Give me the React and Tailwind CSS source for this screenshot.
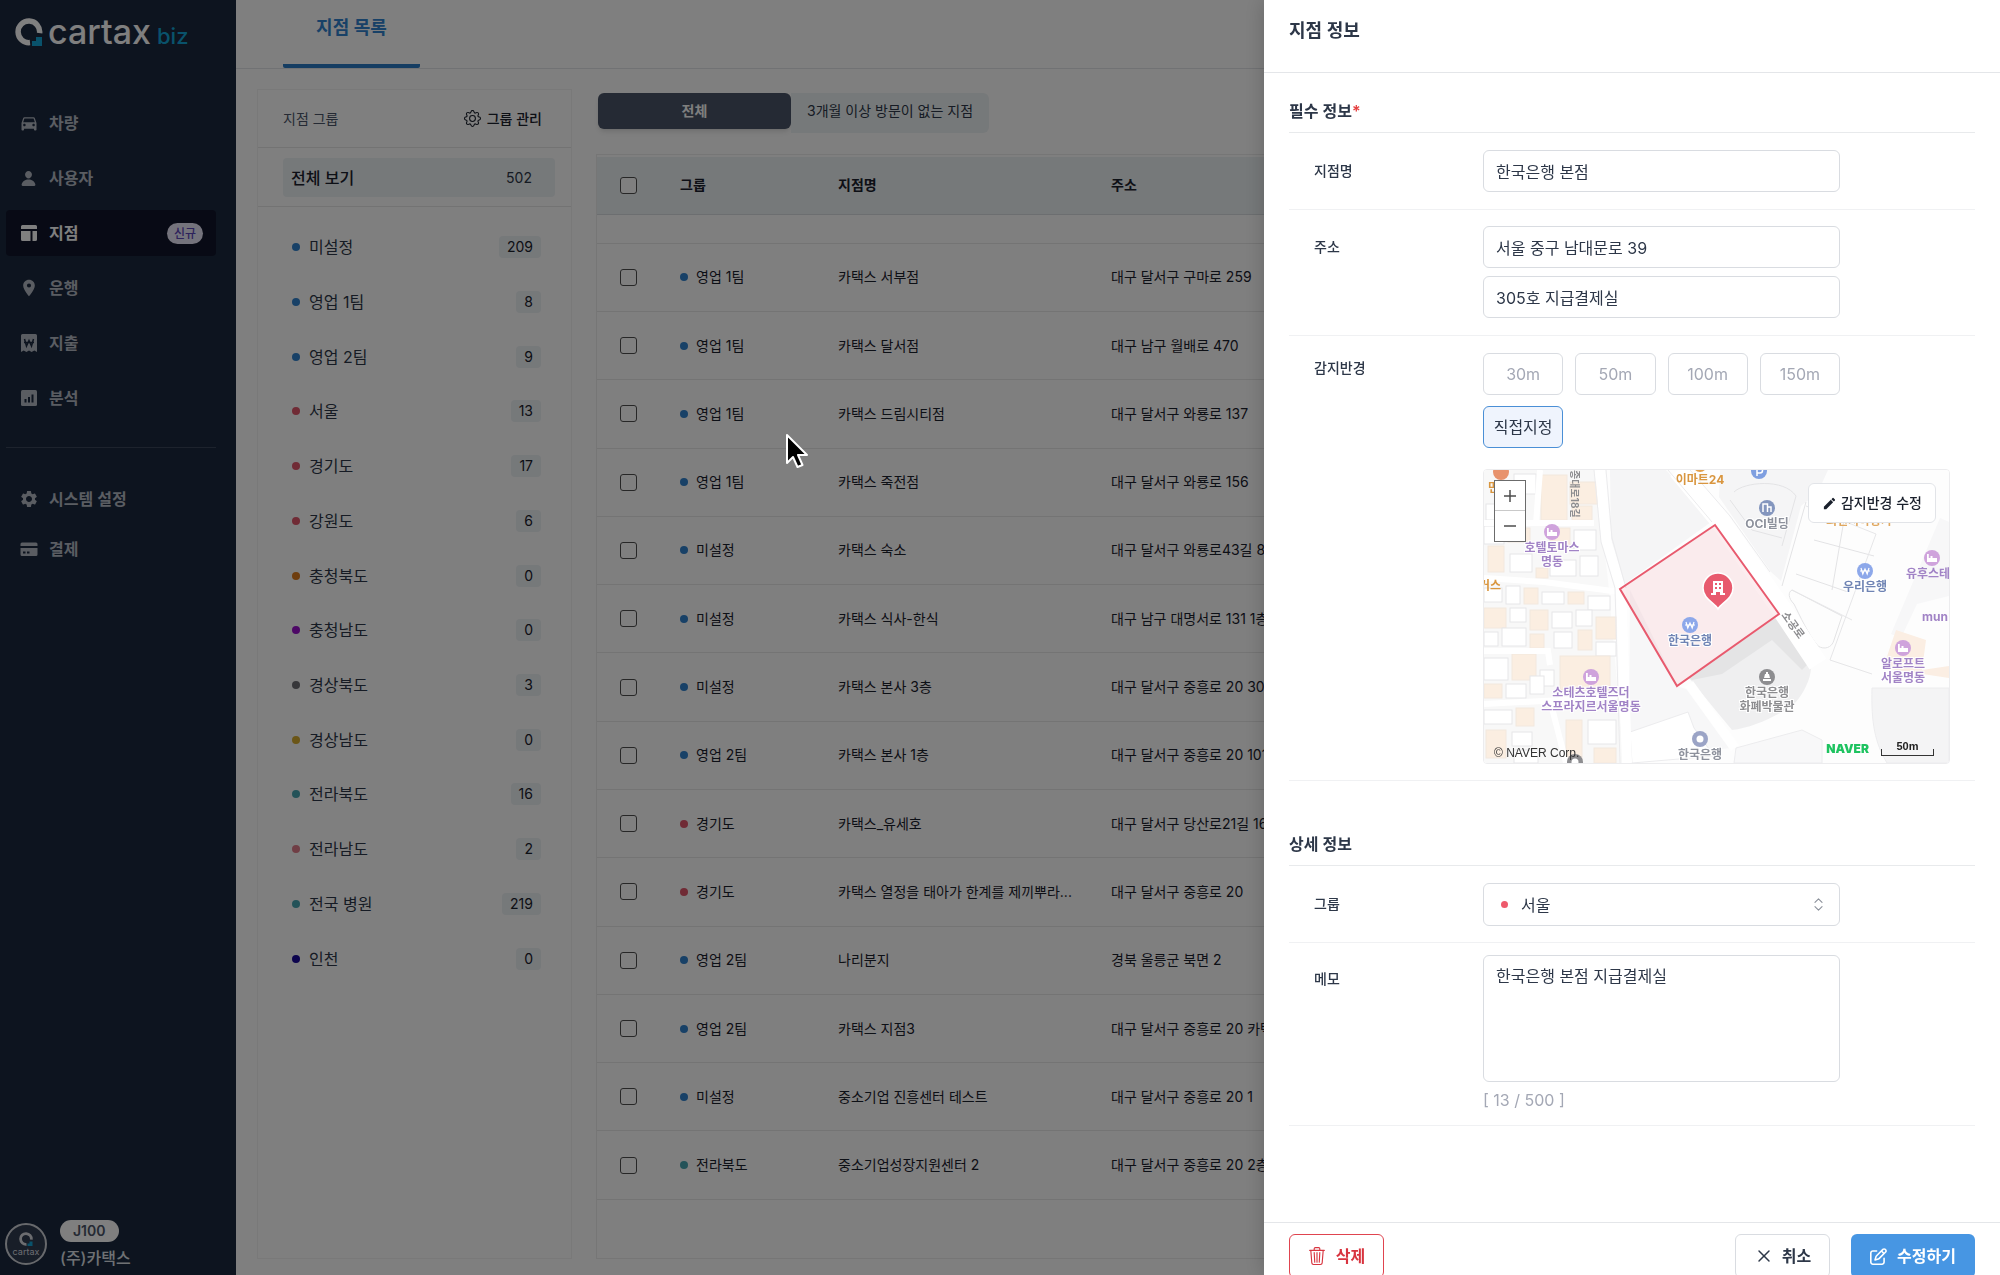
import React, { useState } from "react";
import clsx from "clsx";
import { BsGear, BsTrash3 } from "react-icons/bs";
import { IoPerson } from "react-icons/io5";
import { FaRegPenToSquare } from "react-icons/fa6";
import { MdDirectionsCar, MdEdit, MdLocationOn, MdSettings } from "react-icons/md";
import { ChevronsUpDown, X } from "lucide-react";

const BLUE = "bg-[#3182ce]";
const RED = "bg-[#e0566b]";
const TEAL = "bg-[#46a5b0]";

const GROUPS = [
  { name: "미설정", count: 209, color: BLUE },
  { name: "영업 1팀", count: 8, color: BLUE },
  { name: "영업 2팀", count: 9, color: BLUE },
  { name: "서울", count: 13, color: RED },
  { name: "경기도", count: 17, color: RED },
  { name: "강원도", count: 6, color: RED },
  { name: "충청북도", count: 0, color: "bg-[#dd7a1c]" },
  { name: "충청남도", count: 0, color: "bg-[#9a10cc]" },
  { name: "경상북도", count: 3, color: "bg-[#6e6e74]" },
  { name: "경상남도", count: 0, color: "bg-[#d6ac2e]" },
  { name: "전라북도", count: 16, color: TEAL },
  { name: "전라남도", count: 2, color: "bg-[#e07c8a]" },
  { name: "전국 병원", count: 219, color: TEAL },
  { name: "인천", count: 0, color: "bg-[#1a0a9c]" },
];

const BRANCHES = [
  { group: "영업 1팀", color: BLUE, name: "카택스 서부점", address: "대구 달서구 구마로 259" },
  { group: "영업 1팀", color: BLUE, name: "카택스 달서점", address: "대구 남구 월배로 470" },
  { group: "영업 1팀", color: BLUE, name: "카택스 드림시티점", address: "대구 달서구 와룡로 137" },
  { group: "영업 1팀", color: BLUE, name: "카택스 죽전점", address: "대구 달서구 와룡로 156" },
  { group: "미설정", color: BLUE, name: "카택스 숙소", address: "대구 달서구 와룡로43길 8" },
  { group: "미설정", color: BLUE, name: "카택스 식사-한식", address: "대구 남구 대명서로 131 1층" },
  { group: "미설정", color: BLUE, name: "카택스 본사 3층", address: "대구 달서구 중흥로 20 301호" },
  { group: "영업 2팀", color: BLUE, name: "카택스 본사 1층", address: "대구 달서구 중흥로 20 101호" },
  { group: "경기도", color: RED, name: "카택스_유세호", address: "대구 달서구 당산로21길 16" },
  {
    group: "경기도",
    color: RED,
    name: "카택스 열정을 태아가 한계를 제끼뿌라...",
    address: "대구 달서구 중흥로 20",
  },
  { group: "영업 2팀", color: BLUE, name: "나리분지", address: "경북 울릉군 북면 2" },
  { group: "영업 2팀", color: BLUE, name: "카택스 지점3", address: "대구 달서구 중흥로 20 카택스" },
  { group: "미설정", color: BLUE, name: "중소기업 진흥센터 테스트", address: "대구 달서구 중흥로 20 1" },
  { group: "전라북도", color: TEAL, name: "중소기업성장지원센터 2", address: "대구 달서구 중흥로 20 2층" },
];

const BranchIcon = () => (
  <svg viewBox="0 0 18 18" className="size-[18px]" fill="currentColor">
    <path d="M2.500 1h13A1.500 1.500 0 0117 2.500V5H1V2.500A1.500 1.500 0 012.500 1zM1 7h9.500v10h-8A1.500 1.500 0 011 15.500zM12.500 7H17v8.500a1.500 1.500 0 01-1.500 1.500h-3z" />
  </svg>
);

const ExpenseIcon = () => (
  <svg viewBox="0 0 18 18" className="size-[18px]">
    <path
      fill="currentColor"
      d="M2.500 0h13A1.500 1.500 0 0117 1.500V18l-2.700-1.600L11.600 18 9 16.400 6.400 18l-2.700-1.600L1 18V1.500A1.500 1.500 0 012.500 0z"
    />
    <path
      d="M4.500 5l2 7L9 6.500l2.500 5.500 2-7M4 8.500h10"
      fill="none"
      stroke="#1a283e"
      strokeWidth="1.500"
    />
  </svg>
);

const ReportIcon = () => (
  <svg viewBox="0 0 18 18" className="size-[18px]">
    <rect x="1" y="1" width="16" height="16" rx="1.500" fill="currentColor" />
    <path d="M5.500 13.500V10M9 13.500V8M12.500 13.500v-8" stroke="#1a283e" strokeWidth="2" />
  </svg>
);

const CardIcon = () => (
  <svg viewBox="0 0 18 18" className="size-[18px]">
    <path
      fill="currentColor"
      d="M2 2.500h14A1.500 1.500 0 0117.500 4v2H.5V4A1.500 1.500 0 012 2.500zM.5 8h17v6.500A1.500 1.500 0 0116 16H2a1.500 1.500 0 01-1.500-1.500z"
    />
    <path d="M3 12.500h2.500M7 12.500h2.500" stroke="#1a283e" strokeWidth="2" />
  </svg>
);

const MENU = [
  { label: "차량", icon: <MdDirectionsCar className="size-5" /> },
  { label: "사용자", icon: <IoPerson className="size-[17px]" /> },
  { label: "지점", icon: <BranchIcon />, active: true, badge: "신규" },
  { label: "운행", icon: <MdLocationOn className="size-5" /> },
  { label: "지출", icon: <ExpenseIcon /> },
  { label: "분석", icon: <ReportIcon /> },
];

const SETTINGS_MENU = [
  { label: "시스템 설정", icon: <MdSettings className="size-5" /> },
  { label: "결제", icon: <CardIcon /> },
];

const LogoMark = ({ className }) => (
  <svg viewBox="0 0 28 28" className={className}>
    <path
      d="M15 24.600A10.800 10.800 0 1124.600 15.200"
      fill="none"
      stroke="currentColor"
      strokeWidth="5.500"
    />
    <path d="M17 28v-5h4v-4h6v9z" fill="#12a5d6" />
  </svg>
);

const MenuItem = ({ item }) => (
  <a
    href="#"
    className={clsx(
      "flex h-[46px] items-center rounded pr-[13px] pl-3 text-base font-semibold",
      item.active ? "bg-[#10152a] text-white" : "text-[#b4bac4]"
    )}
  >
    <span className="flex w-[21px] justify-center">{item.icon}</span>
    <span className="ml-[10px]">{item.label}</span>
    {item.badge && (
      <span className="ml-auto rounded-full bg-[#e9e6f8] px-[7px] text-xs leading-[21px] font-medium text-[#5b45b8]">
        {item.badge}
      </span>
    )}
  </a>
);

const Sidebar = () => (
  <aside className="flex w-[236px] shrink-0 flex-col bg-[#1a283e] pb-[5px]">
    <a
      href="#"
      className="flex h-[60px] items-center pt-1 pl-[15px] text-white"
      aria-label="cartax biz"
    >
      <LogoMark className="size-[28px]" />
      <span className="ml-[5px] font-[Inter] text-[34px] leading-none font-medium">cartax</span>
      <span className="ml-[6px] pt-2 font-[Inter] text-[22px] leading-none font-medium text-[#12a5d6]">
        biz
      </span>
    </a>
    <nav className="mt-10 flex flex-1 flex-col px-[6px] pr-5">
      <div className="flex flex-col gap-[9px]">
        {MENU.map((item) => (
          <MenuItem key={item.label} item={item} />
        ))}
      </div>
      <div className="mt-[26px] flex flex-col gap-1 border-t border-[#3b465a] pt-7">
        {SETTINGS_MENU.map((item) => (
          <MenuItem key={item.label} item={item} />
        ))}
      </div>
    </nav>
    <div className="flex items-center gap-[13px] pl-[5px]">
      <div className="flex size-[42px] flex-col items-center justify-center rounded-full border-2 border-[#cfd2d8] bg-[#303c50] text-[#d9dbe0]">
        <LogoMark className="size-[14px]" />
        <span className="font-[Inter] text-[9px] leading-[11px]">cartax</span>
      </div>
      <div>
        <span className="inline-block rounded-full bg-white px-[13px] text-sm leading-[22px] font-semibold text-[#4a5568]">
          J100
        </span>
        <div className="mt-1 text-base leading-6 font-medium text-[#dfe2e8]">(주)카택스</div>
      </div>
    </div>
  </aside>
);

const GroupPanel = () => (
  <section className="w-[315px] shrink-0 border border-[#f2f2f2]">
    <div className="flex h-[58px] items-center border-b border-[#e6e6e6] pr-[29px] pl-[25px]">
      <h2 className="text-sm text-[#4a5568]">지점 그룹</h2>
      <button
        type="button"
        className="ml-auto flex items-center gap-[6px] text-sm font-medium text-[#1a202c]"
      >
        <BsGear className="size-[17px]" />
        그룹 관리
      </button>
    </div>
    <div className="border-b border-[#e6e6e6] pt-[10px] pr-4 pb-[9px] pl-[25px]">
      <button
        type="button"
        className="flex h-[39px] w-full items-center rounded bg-[#edf2f4] pr-[23px] pl-2"
      >
        <span className="text-base font-medium text-[#1a202c]">전체 보기</span>
        <span className="ml-auto text-sm text-[#2d3748]">502</span>
      </button>
    </div>
    <ul className="mt-[13px] grid h-[766px] auto-rows-fr pr-[30px] pl-[34px]">
      {GROUPS.map((group) => (
        <li key={group.name} className="flex items-center">
          <span className={clsx("size-2 rounded-full", group.color)} />
          <span className="ml-[9px] text-base text-[#2d3748]">{group.name}</span>
          <span className="ml-auto rounded bg-[#edf2f4] px-2 text-sm leading-[22px] text-[#1a202c]">
            {group.count}
          </span>
        </li>
      ))}
    </ul>
  </section>
);

const CheckBox = ({ label }) => (
  <input
    type="checkbox"
    aria-label={label}
    className="block size-[17px] appearance-none rounded-[3px] border border-[#4f4f4f] bg-white"
  />
);

const BranchTable = () => (
  <table className="h-[1043px] w-full table-fixed text-left text-sm text-[#1a202c]">
    <colgroup>
      <col className="w-[83px]" />
      <col className="w-[158px]" />
      <col className="w-[273px]" />
      <col />
    </colgroup>
    <thead>
      <tr className="h-[57px] border-b border-[#d8dde0] bg-[#edf2f4]">
        <th className="pl-[23px]">
          <CheckBox label="전체 선택" />
        </th>
        <th className="font-semibold">그룹</th>
        <th className="font-semibold">지점명</th>
        <th className="font-semibold">주소</th>
      </tr>
    </thead>
    <tbody>
      <tr className="h-[29px] border-b border-[#e8e8e8]" aria-hidden="true">
        <td colSpan={4} />
      </tr>
      {BRANCHES.map((branch) => (
        <tr key={branch.name} className="h-[68px] border-b border-[#e8e8e8]">
          <td className="pl-[23px]">
            <CheckBox label={branch.name} />
          </td>
          <td>
            <div className="flex items-center gap-2">
              <span className={clsx("size-2 rounded-full", branch.color)} />
              {branch.group}
            </div>
          </td>
          <td className="truncate pr-4">{branch.name}</td>
          <td className="whitespace-nowrap">{branch.address}</td>
        </tr>
      ))}
    </tbody>
  </table>
);

// small city blocks on the west side of the map
const HOUSES = [
  [57, 5, 26, 45, 1], [86, 12, 28, 22, 1], [88, 36, 20, 14, 1], [2, 34, 24, 16, 0],
  [30, 4, 22, 20, 0], [0, 56, 20, 18, 0], [24, 58, 22, 14, 1], [66, 58, 20, 22, 1],
  [90, 60, 22, 20, 0], [4, 76, 16, 26, 1], [26, 84, 22, 18, 0], [52, 98, 12, 10, 1],
  [66, 90, 26, 16, 0], [96, 86, 18, 20, 0], [0, 118, 18, 14, 0], [22, 116, 14, 18, 0],
  [40, 118, 14, 16, 1], [58, 122, 22, 12, 0], [84, 122, 16, 12, 1], [104, 126, 22, 14, 0],
  [0, 138, 22, 20, 1], [26, 138, 16, 14, 0], [46, 140, 18, 20, 1], [68, 142, 20, 16, 0],
  [92, 140, 16, 16, 0], [112, 147, 20, 22, 1], [0, 162, 14, 14, 0], [18, 158, 24, 18, 0],
  [46, 164, 14, 14, 1], [70, 162, 18, 16, 0], [94, 160, 14, 20, 1], [112, 172, 20, 14, 0],
  [0, 188, 24, 22, 0], [28, 184, 24, 26, 1], [56, 200, 14, 16, 0], [76, 186, 50, 34, 1],
  [0, 214, 18, 14, 1], [22, 214, 20, 14, 0], [46, 206, 14, 18, 0], [0, 240, 28, 14, 0],
  [32, 238, 18, 18, 1], [2, 260, 20, 28, 1], [28, 262, 20, 14, 0], [30, 280, 24, 13, 0],
  [82, 250, 16, 40, 1], [104, 250, 28, 24, 0], [110, 278, 22, 15, 1],
];

const Poi = ({ x, y, color, glyph, lines, textColor = color, gap = 16 }) => (
  <g>
    <circle cx={x} cy={y} r="8" fill={color} />
    {glyph === "won" && (
      <path
        d={`M${x - 4} ${y - 3}l1.800 6L${x} ${y - 2}l2.200 5 1.800-6M${x - 5} ${y}h10`}
        fill="none"
        stroke="#fff"
        strokeWidth="1.200"
      />
    )}
    {glyph === "bed" && (
      <path d={`M${x - 5} ${y - 4}h1.800v4H${x - 1.5}v-2h2v2H${x + 5}v4h-10z`} fill="#fff" />
    )}
    {glyph === "building" && (
      <path
        d={`M${x - 4} ${y + 4}v-8h4.500v8M${x + 1} ${y - 1}h3v5`}
        fill="none"
        stroke="#fff"
        strokeWidth="1.500"
      />
    )}
    {glyph === "museum" && (
      <path d={`M${x - 4} ${y + 4}v-2h8v2zM${x - 3} ${y + 1}l1-4h1v-2h2v2h1l1 4z`} fill="#fff" />
    )}
    {glyph === "ring" && <circle cx={x} cy={y} r="3.500" fill="#fff" />}
    {lines.map((line, i) => (
      <text
        key={line}
        x={x}
        y={y + gap + 4 + i * 14}
        textAnchor="middle"
        fill={textColor}
        stroke="#fff"
        strokeWidth="2"
        paintOrder="stroke"
      >
        {line}
      </text>
    ))}
  </g>
);

const MapCanvas = () => (
  <svg
    viewBox="0 0 465 293"
    preserveAspectRatio="xMidYMid slice"
    className="block size-full text-[12px] font-bold"
  >
    <rect width="465" height="293" fill="#fdfdfd" />
    <path d="M126 0h56l45 52-92 66-8-50z" fill="#f5f5f6" />
    <path d="M236 0h108l-10 22-17 14-20 75-10-9-52-75z" fill="#f5f5f6" />
    <path
      d="M250 22c10-10 50-14 62 4l-14 50M246 30l22 30 30 8M322 32l-24 84M330 70l60 16M312 104l52 18M360 50l-12 70M308 120c-4 2-4 8 2 14 6 12 14 30 24 42 6 4 14 2 16-6l8-24z"
      fill="none"
      stroke="#e3e3e5"
      strokeWidth="1"
    />
    <path d="M308 120l60 30M322 36l70 28-46 126 42 14" fill="none" stroke="#e6e6e8" />
    <path d="M456 48l9 4v74l-32 8-16 34-10-4z" fill="#f7f7f8" />
    <path d="M412 160l30 10-4 30 27-4v12l-66-10z" fill="#fbeee3" />
    <path d="M388 218h77v75h-62c-12-20-16-40-15-75z" fill="#f4f4f5" stroke="#ececee" />
    <path d="M146 120l47 96 12 4 42 58-92 10-10-24z" fill="#f7f7f8" />
    <path d="M146 262l58-20 6 16 20 28-82 7z" fill="#fff" stroke="#ececee" />
    <path d="M294 146l32 46c4 8-4 30-16 42-16 12-42 24-62 26l-43-52z" fill="#efeff0" />
    <path d="M294 146l32 46-8 8-30-30-50 34-30 6-3-2z" fill="#e4e4e5" />
    <path d="M252 278l66-18 20 10v23h-88z" fill="#f8f8f9" stroke="#ececee" />
    <path d="M0 0h110l14 110 16 183H0z" fill="#f8f8f8" />
    {HOUSES.map(([x, y, w, h, warm]) => (
      <rect
        key={`${x}-${y}`}
        x={x}
        y={y}
        width={w}
        height={h}
        fill={warm ? "#fbeee1" : "#fff"}
        stroke={warm ? "#f2e8de" : "#e6e6e8"}
        strokeWidth="1"
      />
    ))}
    <path
      d="M0 108l60 4 76 10M0 181h64l2 14M0 234l78-4 60-4M56 0l-4 54M0 53h110M66 230l16 63"
      fill="none"
      stroke="#fff"
      strokeWidth="6"
    />
    <path d="M116 0l6 70 15 48 6 175" fill="none" stroke="#fff" strokeWidth="10" />
    <path d="M110 0l7 72 14 46 5 175M122 0l6 68 14 50" fill="none" stroke="#ebebed" />
    <path d="M194 0l40 48 64 92 36 54" fill="none" stroke="#fff" strokeWidth="20" />
    <path d="M184 0l44 52M206 0l40 46 40 56" fill="none" stroke="#ebebed" />
    <path d="M205 214l46 64" stroke="#fff" strokeWidth="10" />

    <text x="216" y="14" textAnchor="middle" fill="#d9963f">이마트24</text>
    <circle cx="216" cy="-5" r="7" fill="#e2a04c" />
    <circle cx="275" cy="1" r="8" fill="#7f9fe0" />
    <path d="M273 6v-8h3a2.500 2.500 0 010 5h-3" fill="none" stroke="#fff" strokeWidth="1.500" />
    <circle cx="17" cy="2" r="8" fill="#e8936d" />
    <text x="4" y="22" fill="#d9963f">면</text>
    <text x="17" y="120" textAnchor="end" fill="#d9963f">커스</text>
    <text transform="translate(87 0) rotate(90)" fontSize="10" fill="#8d8d90">종대로18길</text>
    <text transform="translate(297 145) rotate(54)" fontSize="11" fill="#8d8d90">소공로</text>
    <text x="375" y="55" textAnchor="middle" fill="#e0a860">회현지하상가</text>
    <text x="422" y="108" fill="#a183c6">유후스테이</text>
    <text x="438" y="151" fill="#a183c6">mun</text>

    <Poi x={68} y={62} color="#cfa3dc" textColor="#a183c6" glyph="bed" lines={["호텔토마스", "명동"]} />
    <Poi x={107} y={207} color="#cfa3dc" textColor="#a183c6" glyph="bed" lines={["소테츠호텔즈더", "스프라지르서울명동"]} />
    <Poi x={419} y={178} color="#cfa3dc" textColor="#a183c6" glyph="bed" lines={["알로프트", "서울명동"]} />
    <Poi x={448} y={88} color="#cfa3dc" glyph="bed" lines={[]} />
    <Poi x={283} y={38} color="#8496be" textColor="#8d919c" glyph="building" lines={["OCI빌딩"]} />
    <Poi x={381} y={101} color="#8da8ea" textColor="#6f84b4" glyph="won" lines={["우리은행"]} />
    <Poi x={283} y={207} color="#8d8d90" glyph="museum" lines={["한국은행", "화폐박물관"]} />
    <Poi x={216} y={269} color="#9ba4c6" textColor="#8d919c" glyph="ring" lines={["한국은행"]} />
    <Poi x={91} y={292} color="#8d8d90" glyph="ring" lines={[]} />

    <path
      d="M231 55l64 89-102 72-57-97z"
      fill="#e85a6e"
      fillOpacity="0.110"
      stroke="#e85a6e"
      strokeWidth="2"
    />
    <Poi x={206} y={155} color="#8da8ea" textColor="#6f84b4" glyph="won" lines={["한국은행"]} />
    <path
      d="M234 139c-3-6-15-10-15-21a15 15 0 0130 0c0 11-12 15-15 21z"
      fill="#e85a6e"
      stroke="#fff"
      strokeWidth="1.500"
    />
    <path
      fill="#fff"
      fillRule="evenodd"
      d="M229 111h10v12h2v2h-5v-3h-4v3h-5v-2h2zM231 113v2h2v-2zM235 113v2h2v-2zM231 117v2h2v-2zM235 117v2h2v-2z"
    />
  </svg>
);

const BranchMap = () => (
  <div className="relative mt-[21px] mr-[25px] h-[295px] overflow-hidden rounded border border-[#ececee]">
    <MapCanvas />
    <div className="absolute top-[10px] left-[10px] flex w-8 flex-col border border-[#6b6b6b] bg-white text-[#4d4d4d]">
      <button
        type="button"
        aria-label="확대"
        className="flex h-[30px] items-center justify-center border-b border-[#c9c9c9]"
      >
        <svg viewBox="0 0 14 14" className="size-[14px]" stroke="currentColor" strokeWidth="1.500">
          <path d="M1 7h12M7 1v12" />
        </svg>
      </button>
      <button type="button" aria-label="축소" className="flex h-[30px] items-center justify-center">
        <svg viewBox="0 0 14 14" className="size-[14px]" stroke="currentColor" strokeWidth="1.500">
          <path d="M1 7h12" />
        </svg>
      </button>
    </div>
    <button
      type="button"
      className="absolute top-[13px] right-[13px] flex h-10 items-center gap-1 rounded-md border border-[#e2e4e8] bg-white px-[13px] text-sm font-medium text-[#1a202c]"
    >
      <MdEdit className="size-[15px]" />
      감지반경 수정
    </button>
    <span className="absolute bottom-[-2px] left-[10px] font-['Liberation_Sans'] text-xs leading-6 text-[#333]">
      © NAVER Corp.
    </span>
    <div className="absolute right-[15px] bottom-[7px] flex items-end gap-3">
      <span className="font-[Inter] text-xs leading-[14px] font-black text-[#1ec360]">NAVER</span>
      <span className="relative w-[53px] pb-[3px] text-center font-['Liberation_Sans'] text-[11px] leading-[13px] font-bold text-[#222]">
        50m
        <span className="absolute inset-x-0 bottom-0 h-[7px] border-x border-b border-[#333]" />
      </span>
    </div>
  </div>
);

const FormRow = ({ label, htmlFor, labelClass, className, children }) => (
  <div className={clsx("flex border-b border-[#f0f1f3] pl-[25px]", className)}>
    <label
      htmlFor={htmlFor}
      className={clsx("flex w-[169px] shrink-0 items-center text-sm font-medium text-[#2d3748]", labelClass)}
    >
      {label}
    </label>
    <div className="min-w-0 flex-1">{children}</div>
  </div>
);

const INPUT_CLASS =
  "block h-[42px] w-[357px] rounded-md border border-[#d9dce1] bg-white px-3 text-base text-[#2d3748] outline-none";

const RADIUS_OPTIONS = ["30m", "50m", "100m", "150m", "직접지정"];

const BranchDrawer = () => {
  const [name, setName] = useState("한국은행 본점");
  const [address, setAddress] = useState("서울 중구 남대문로 39");
  const [addressDetail, setAddressDetail] = useState("305호 지급결제실");
  const [radius, setRadius] = useState("직접지정");
  const [group, setGroup] = useState("서울");
  const [memo, setMemo] = useState("한국은행 본점 지급결제실");

  return (
    <aside className="fixed inset-y-0 right-0 flex w-[736px] flex-col bg-white shadow-[0_0_20px_rgba(0,0,0,0.2)]">
      <header className="flex h-[73px] shrink-0 items-start border-b border-[#e4e6e9] px-[25px] pt-[17px]">
        <h1 className="text-lg leading-7 font-semibold text-[#2d3748]">지점 정보</h1>
      </header>

      <div className="min-h-0 flex-1 overflow-hidden px-[25px] pt-[26px]">
        <h2 className="border-b border-[#e8eaec] pb-[9px] text-base leading-6 font-semibold text-[#2d3748]">
          필수 정보<span className="text-[#e53e3e]">*</span>
        </h2>
        <FormRow label="지점명" htmlFor="name" labelClass="h-[42px]" className="py-[17px]">
          <input
            id="name"
            className={INPUT_CLASS}
            value={name}
            onChange={(e) => setName(e.target.value)}
          />
        </FormRow>
        <FormRow label="주소" htmlFor="address" labelClass="h-[42px]" className="pt-4 pb-[17px]">
          <input
            id="address"
            className={INPUT_CLASS}
            value={address}
            onChange={(e) => setAddress(e.target.value)}
          />
          <input
            aria-label="상세 주소"
            className={clsx(INPUT_CLASS, "mt-2")}
            value={addressDetail}
            onChange={(e) => setAddressDetail(e.target.value)}
          />
        </FormRow>
        <FormRow label="감지반경" labelClass="h-[30px]" className="pt-[17px] pb-4">
          <div className="grid w-[357px] grid-cols-4 gap-x-3 gap-y-[11px]">
            {RADIUS_OPTIONS.map((option) => (
              <button
                key={option}
                type="button"
                onClick={() => setRadius(option)}
                className={clsx(
                  "h-[42px] rounded-md border text-base",
                  radius === option
                    ? "border-[#4a8fd6] bg-[#eff4fd] text-[#2d3748]"
                    : "border-[#d9dce1] bg-white text-[#a4a8b5]"
                )}
              >
                {option}
              </button>
            ))}
          </div>
          <BranchMap />
        </FormRow>

        <h2 className="mt-[51px] border-b border-[#e8eaec] pb-[9px] text-base leading-6 font-semibold text-[#2d3748]">
          상세 정보
        </h2>
        <FormRow label="그룹" htmlFor="group" labelClass="h-[42px]" className="pt-[17px] pb-4">
          <div className="relative w-[357px]">
            <select
              id="group"
              className="block h-[43px] w-full appearance-none rounded-md border border-[#d9dce1] bg-white pl-[37px] text-base text-[#2d3748] outline-none"
              value={group}
              onChange={(e) => setGroup(e.target.value)}
            >
              {GROUPS.map((item) => (
                <option key={item.name}>{item.name}</option>
              ))}
            </select>
            <span className="absolute top-[18px] left-[18px] size-[7px] rounded-full bg-[#ee5a6c]" />
            <ChevronsUpDown
              className="pointer-events-none absolute top-[13px] right-[13px] size-[17px] text-[#8a8f99]"
              strokeWidth={1.5}
            />
          </div>
        </FormRow>
        <FormRow label="메모" htmlFor="memo" labelClass="h-12" className="pt-3 pb-[13px]">
          <textarea
            id="memo"
            className="block h-[127px] w-[357px] resize-none rounded-md border border-[#d9dce1] bg-white px-3 py-2 text-base leading-6 text-[#2d3748] outline-none"
            value={memo}
            onChange={(e) => setMemo(e.target.value)}
          />
          <p className="mt-[6px] text-base leading-6 text-[#a4a8b5]">[ {memo.length} / 500 ]</p>
        </FormRow>
      </div>

      <footer className="flex h-[53px] shrink-0 items-start gap-[21px] overflow-hidden border-t border-[#e4e6e9] px-[25px] pt-[11px]">
        <button
          type="button"
          className="mr-auto flex h-11 w-[95px] shrink-0 items-center justify-center gap-[10px] rounded-md border border-[#e0444f] text-base font-semibold text-[#d8343f]"
        >
          <BsTrash3 className="size-[18px]" />
          삭제
        </button>
        <button
          type="button"
          className="flex h-11 w-[95px] shrink-0 items-center justify-center gap-2 rounded-md border border-[#d9dce1] text-base font-semibold text-[#2d3748]"
        >
          <X className="size-5" strokeWidth={1.75} />
          취소
        </button>
        <button
          type="button"
          className="flex h-11 w-[124px] shrink-0 items-center justify-center gap-[10px] rounded-md bg-[#4796e3] text-base font-semibold text-white"
        >
          <FaRegPenToSquare className="size-[17px]" />
          수정하기
        </button>
      </footer>
    </aside>
  );
};

const App = () => {
  return (
    <div className="flex h-screen overflow-hidden bg-white font-[Inter,'Noto_Sans_CJK_KR',sans-serif]">
      <Sidebar />
      <main className="flex min-w-0 flex-1 flex-col">
        <div className="flex h-[69px] shrink-0 border-b border-[#e2e4e8] pl-[47px]">
          <button
            type="button"
            className="w-[137px] rounded-b-[2px] border-b-4 border-[#2b7bc4] pb-2 text-lg leading-7 font-semibold text-[#3182ce]"
          >
            지점 목록
          </button>
        </div>
        <div className="flex min-h-0 flex-1 gap-6 pt-5 pb-4 pl-[21px]">
          <GroupPanel />
          <section className="flex min-w-0 flex-1 flex-col">
            <div className="mt-1 ml-[2px] flex items-start">
              <button
                type="button"
                className="h-9 w-[193px] rounded-md bg-[#4a5568] text-sm font-semibold text-white shadow-md"
              >
                전체
              </button>
              <button
                type="button"
                className="h-10 rounded-r-md bg-[#edf2f4] px-4 pb-1 text-sm text-[#2d3748]"
              >
                3개월 이상 방문이 없는 지점
              </button>
            </div>
            <div className="mt-[21px] min-h-0 flex-1 border-y border-l border-[#ececec] pt-[2px]">
              <BranchTable />
            </div>
          </section>
        </div>
      </main>

      <div className="fixed inset-0 bg-black/50" />
      <BranchDrawer />

      {/* pointer */}
      <svg viewBox="0 0 24 36" className="fixed top-[433px] left-[785px] h-9 w-6">
        <path
          d="M2 2v28l6-6 4.500 10 5-2-4.500-10h9z"
          fill="#000"
          stroke="#fff"
          strokeWidth="2"
          strokeLinejoin="round"
        />
      </svg>
    </div>
  );
};

export default App;
